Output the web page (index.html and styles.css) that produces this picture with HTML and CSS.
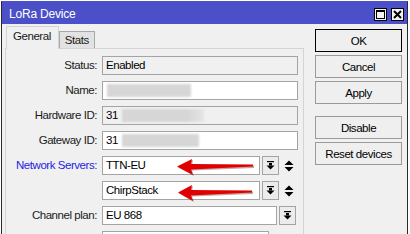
FILE: index.html
```html
<!DOCTYPE html>
<html>
<head>
<meta charset="utf-8">
<link rel="stylesheet" href="styles.css">
</head>
<body>
<div class="win">
  <div class="titlebar">
    <span class="title">LoRa Device</span>
    <div class="wbtns">
      <span class="wbtn"><svg width="11" height="11" viewBox="0 0 11 11"><rect x="1.5" y="1.5" width="8" height="8" fill="none" stroke="#000" stroke-width="1"/><rect x="1" y="1" width="9" height="2" fill="#000"/></svg></span>
      <span class="wbtn"><svg width="11" height="11" viewBox="0 0 11 11"><path d="M2 2 L9 9 M9 2 L2 9" stroke="#000" stroke-width="2"/></svg></span>
    </div>
  </div>
  <div class="body">
    <div class="left">
      <div class="tabs">
        <div class="tab active">General</div>
        <div class="tab">Stats</div>
      </div>
      <div class="panel">
        <div class="lbl">Status:</div>
        <div class="field ro">Enabled</div>

        <div class="lbl">Name:</div>
        <div class="field"><span class="blur b-name"></span></div>

        <div class="lbl">Hardware ID:</div>
        <div class="field ro">31<span class="blur b-hw"></span></div>

        <div class="lbl">Gateway ID:</div>
        <div class="field">31<span class="blur b-gw"></span></div>

        <div class="lbl blue">Network Servers:</div>
        <div class="combo">
          <div class="field short">TTN-EU
            <svg class="arrow" width="84" height="19" viewBox="0 0 84 19"><path d="M4 10.5 L19 3 L18 8 L80 8.5 L80 11 L18 13.5 L20 19 Z" fill="#5a0000" opacity="0.35"/><path d="M3 9.5 L18 2 L17 7 L79 7.5 L79 9.5 L17 12.5 L19 18 Z" fill="#e00000"/></svg>
          </div>
          <span class="dd"><svg width="9" height="9" viewBox="0 0 9 9"><rect x="1" y="0" width="7" height="1.2" fill="#000"/><rect x="3" y="2" width="3" height="2.5" fill="#000"/><path d="M0.5 4.5 L8.5 4.5 L4.5 8.5 Z" fill="#000"/></svg></span>
          <span class="ud"><svg width="10" height="12" viewBox="0 0 10 12"><path d="M0.5 5 L9.5 5 L5 0.5 Z" fill="#000"/><path d="M0.5 7 L9.5 7 L5 11.5 Z" fill="#000"/></svg></span>
        </div>

        <div class="lbl"></div>
        <div class="combo">
          <div class="field short">ChirpStack
            <svg class="arrow a2" width="84" height="19" viewBox="0 0 84 19"><path d="M4 10.5 L18 3 L17 8 L78 8.5 L78 11 L17 13.5 L19 19 Z" fill="#5a0000" opacity="0.35"/><path d="M3 9.5 L17 2 L16 7 L77 7.5 L77 9.5 L16 12.5 L18 18 Z" fill="#e00000"/></svg>
          </div>
          <span class="dd"><svg width="9" height="9" viewBox="0 0 9 9"><rect x="1" y="0" width="7" height="1.2" fill="#000"/><rect x="3" y="2" width="3" height="2.5" fill="#000"/><path d="M0.5 4.5 L8.5 4.5 L4.5 8.5 Z" fill="#000"/></svg></span>
          <span class="ud"><svg width="10" height="12" viewBox="0 0 10 12"><path d="M0.5 5 L9.5 5 L5 0.5 Z" fill="#000"/><path d="M0.5 7 L9.5 7 L5 11.5 Z" fill="#000"/></svg></span>
        </div>

        <div class="lbl">Channel plan:</div>
        <div class="combo">
          <div class="field wide">EU 868</div>
          <span class="dd"><svg width="9" height="9" viewBox="0 0 9 9"><rect x="1" y="0" width="7" height="1.2" fill="#000"/><rect x="3" y="2" width="3" height="2.5" fill="#000"/><path d="M0.5 4.5 L8.5 4.5 L4.5 8.5 Z" fill="#000"/></svg></span>
        </div>

        <div class="lbl"></div>
        <div class="combo">
          <div class="field part"></div>
        </div>
      </div>
    </div>
    <div class="buttons">
      <div class="btn default">OK</div>
      <div class="btn">Cancel</div>
      <div class="btn">Apply</div>
      <div class="btn gap">Disable</div>
      <div class="btn">Reset devices</div>
    </div>
  </div>
</div>
</body>
</html>
```

FILE: styles.css
```css
html, body {
  margin: 0;
  padding: 0;
  background: #ffffff;
  height: 234px;
  overflow: hidden;
}
.win {
  margin: 1px 0 0 1px;
  width: 407px;
  height: 233px;
  box-sizing: border-box;
  overflow: hidden;
  border: 1px solid #2a2a2a;
  border-top-color: #4b4fc8;
  border-bottom: none;
  background: #f0f0f0;
  font-family: "Liberation Sans", Arial, sans-serif;
  font-size: 11.5px;
  letter-spacing: -0.45px;
  color: #1a1a1a;
}
.titlebar {
  height: 22px;
  background: #4b4fc8;
  display: flex;
  align-items: center;
  justify-content: space-between;
  padding: 0 3px 0 7px;
}
.title {
  color: #ffffff;
  font-size: 12px;
  letter-spacing: -0.2px;
  padding-top: 1px;
}
.wbtns {
  display: flex;
  gap: 4px;
  padding-top: 2px;
}
.wbtn {
  width: 13px;
  height: 13px;
  box-sizing: border-box;
  border: 1px solid #000;
  background: #f4f4f4;
  display: flex;
  align-items: center;
  justify-content: center;
}
.wbtn svg { display: block; }
.body {
  display: flex;
  padding: 2px 0 0 3px;
}
.left {
  width: 299px;
}
.tabs {
  display: flex;
  align-items: flex-end;
  height: 22px;
  padding-left: 1px;
}
.tab {
  box-sizing: border-box;
  height: 17px;
  padding: 2px 5px 0 5px;
  border: 1px solid #a8a8a8;
  border-bottom: none;
  background: #e2e2e2;
}
.tab.active {
  height: 23px;
  margin-bottom: -1px;
  padding: 3px 7px 0 6px;
  background: #f0f0f0;
  border-color: #d4d4d4;
  position: relative;
  z-index: 1;
}
.panel {
  height: 190px;
  box-sizing: border-box;
  border: 1px solid #d4d4d4;
  border-bottom: none;
  padding: 7px 5px 0 1px;
  display: grid;
  grid-template-columns: 90px 1fr;
  grid-auto-rows: 19px;
  column-gap: 5px;
  row-gap: 6px;
  overflow: hidden;
}
.lbl {
  text-align: right;
  line-height: 19px;
  white-space: nowrap;
}
.lbl.blue { color: #2424e0; }
.field {
  box-sizing: border-box;
  height: 19px;
  border: 1px solid #a4a4a4;
  background: #ffffff;
  padding: 0 3px;
  line-height: 17px;
  color: #000;
  position: relative;
  white-space: nowrap;
  display: flex;
  align-items: center;
}
.field.ro { background: #f0f0f0; }
.combo {
  display: flex;
  align-items: center;
}
.field.short { width: 158px; }
.field.wide { width: 175px; }
.field.part { width: 167px; }
.dd {
  box-sizing: border-box;
  width: 17px;
  height: 19px;
  margin-left: 2px;
  border: 1px solid #a4a4a4;
  background: #ececec;
  display: flex;
  align-items: center;
  justify-content: center;
}
.dd svg { display: block; }
.ud {
  margin-left: 5px;
  display: flex;
  align-items: center;
}
.ud svg { display: block; }
.arrow {
  position: absolute;
  left: 71px;
  top: 0px;
}
.arrow.a2 { left: 72px; top: 1px; }
.blur {
  display: block;
  height: 13px;
  background: #d6d6d6;
  filter: blur(1px);
}
.b-name { width: 84px; margin-left: 1px; }
.b-hw { width: 82px; margin-left: 4px; background: linear-gradient(90deg, #d6d6d6 0%, #d6d6d6 80%, #e6e6e6 100%); }
.b-gw { width: 77px; margin-left: 4px; }
.buttons {
  margin-left: 11px;
  padding-top: 3px;
  display: flex;
  flex-direction: column;
  gap: 3px;
  width: 87px;
}
.btn {
  box-sizing: border-box;
  height: 23px;
  border: 1px solid #9a9a9a;
  background: #efefef;
  display: flex;
  align-items: center;
  justify-content: center;
  color: #000;
  white-space: nowrap;
}
.btn.default { border-color: #000; }
.btn.gap { margin-top: 9px; }
```
